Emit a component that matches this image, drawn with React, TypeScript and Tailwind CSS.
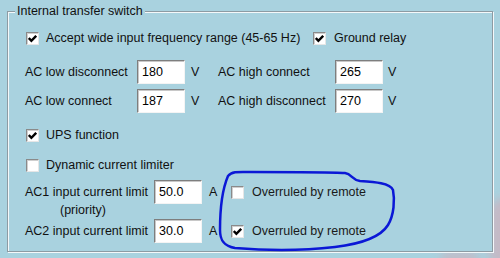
import React from "react";

const font = "font-['Liberation_Sans',Arial,sans-serif]";

const Check: React.FC<{ checked?: boolean }> = ({ checked }) => (
    <div className="w-[13px] h-[13px] shrink-0 bg-white border border-t-[#8a8a8a] border-l-[#8a8a8a] border-b-[#e6e6e6] border-r-[#e6e6e6] shadow-[inset_1px_1px_0_#cfcfcf] flex items-center justify-center">
        {checked && (
            <svg width="9" height="9" viewBox="0 0 9 9">
                <path d="M0.8 4 L3.4 6.8 L8.2 1.8" stroke="#000" strokeWidth="2.4" fill="none" />
            </svg>
        )}
    </div>
);

const Field: React.FC<{ value: string }> = ({ value }) => (
    <div className="w-[48px] h-[24px] shrink-0 bg-white border border-t-[#7e7e7e] border-l-[#7e7e7e] border-b-[#f4f4f4] border-r-[#f4f4f4] shadow-[inset_1px_1px_0_#c8c8c8] pl-[4px] flex items-center text-[12.5px] text-black">
        {value}
    </div>
);

export default function App() {
    return (
        <div className={`relative w-[500px] h-[258px] overflow-hidden bg-[#a9d2df] ${font} text-[12.5px] text-[#111]`}>
            {/* faint wallpaper showing through at the edge */}
            <div className="absolute right-[-22px] bottom-[-10px] w-[34px] h-[70px] rounded-full bg-[#d6aab6] blur-[5px] opacity-60" />
            <div className="absolute right-[20px] bottom-[-14px] w-[40px] h-[22px] rounded-full bg-[#d6aab6] blur-[5px] opacity-50" />
            <div className="relative pt-[11px] pl-[7px]">
                <div className="relative w-[486px] h-[241px] bg-[#a9d2df] border border-[#8d9ba3] shadow-[inset_1px_1px_0_#f4f8fa,1px_1px_0_#f4f8fa]">
                    <div className="-mt-[9px] ml-[7px] w-fit h-[16px] px-[2px] bg-[#a9d2df] flex items-center">
                        Internal transfer switch
                    </div>

                    <div className="mt-[12px] h-[14px] pl-[18px] flex items-center">
                        <Check checked />
                        <span className="ml-[7px] w-[267px]">Accept wide input frequency range (45-65 Hz)</span>
                        <Check checked />
                        <span className="ml-[8px]">Ground relay</span>
                    </div>

                    <div className="mt-[15px] h-[24px] pl-[17px] flex items-center">
                        <span className="w-[112px]">AC low disconnect</span>
                        <Field value="180" />
                        <span className="w-[33px] pl-[6px]">V</span>
                        <span className="w-[117px]">AC high connect</span>
                        <Field value="265" />
                        <span className="pl-[5px]">V</span>
                    </div>

                    <div className="mt-[5px] h-[24px] pl-[17px] flex items-center">
                        <span className="w-[112px]">AC low connect</span>
                        <Field value="187" />
                        <span className="w-[33px] pl-[6px]">V</span>
                        <span className="w-[117px]">AC high disconnect</span>
                        <Field value="270" />
                        <span className="pl-[5px]">V</span>
                    </div>

                    <div className="mt-[15px] h-[14px] pl-[18px] flex items-center">
                        <Check checked />
                        <span className="ml-[7px]">UPS function</span>
                    </div>

                    <div className="mt-[16px] h-[14px] pl-[18px] flex items-center">
                        <Check />
                        <span className="ml-[7px]">Dynamic current limiter</span>
                    </div>

                    <div className="mt-[8px] h-[24px] pl-[17px] flex items-center">
                        <span className="w-[129px]">AC1 input current limit</span>
                        <Field value="50.0" />
                        <span className="w-[29px] pl-[7px]">A</span>
                        <Check />
                        <span className="ml-[8px] text-[#1a1a1a]">Overruled by remote</span>
                    </div>
                    <div className="h-[12px] leading-[12px] pl-[52px]">(priority)</div>

                    <div className="mt-[3px] h-[24px] pl-[17px] flex items-center">
                        <span className="w-[129px]">AC2 input current limit</span>
                        <Field value="30.0" />
                        <span className="w-[29px] pl-[7px]">A</span>
                        <Check checked />
                        <span className="ml-[8px] text-[#1a1a1a]">Overruled by remote</span>
                    </div>
                </div>
            </div>

            <svg className="absolute inset-0 pointer-events-none" width="500" height="258" viewBox="0 0 500 258">
                <path
                    d="M250 172 C280 172 330 172 345 173 C352 174 352 180 360 181 C375 182 390 183 393 190 C395 200 394 215 388 225 C380 238 360 244 335 247 C300 251 260 250 235 248 C222 246 220 238 220 230 C220 210 222 190 228 176 C232 171 240 172 250 172"
                    stroke="#0b18d6"
                    strokeWidth="2.5"
                    fill="none"
                />
            </svg>
        </div>
    );
}
